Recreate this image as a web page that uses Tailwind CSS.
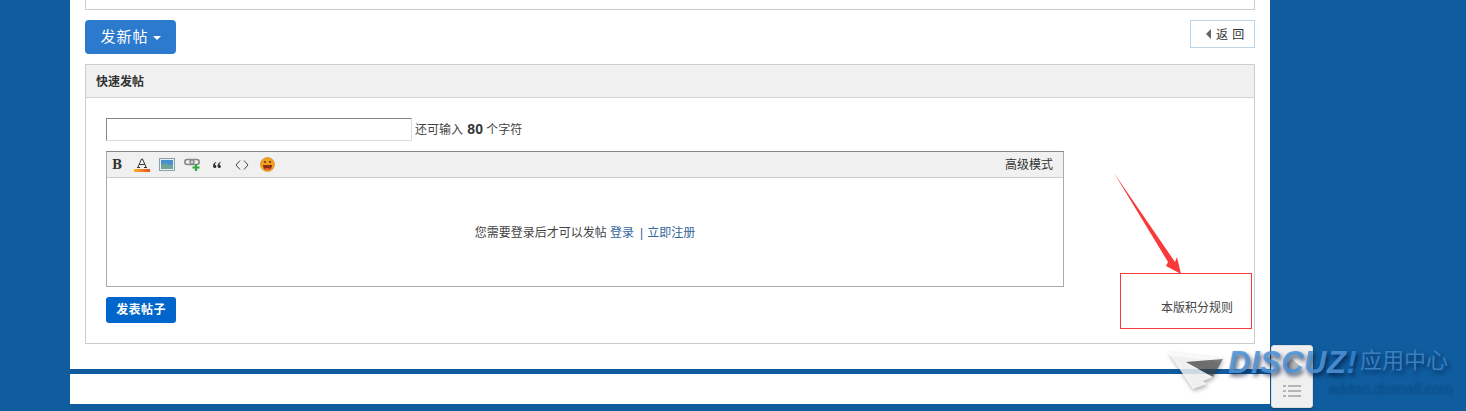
<!DOCTYPE html>
<html lang="zh-CN">
<head>
    <meta charset="UTF-8">
    <title>快速发帖</title>
    <script src="https://cdn.jsdelivr.net/npm/@tailwindcss/browser@4"></script>
</head>
<body class="bg-[#0f5c9e] h-[411px] overflow-hidden font-['Liberation_Sans','Noto_Sans_CJK_SC',sans-serif] text-[12px] text-[#444]">
    <div class="relative ml-[70px] w-[1200px] h-[404px] bg-white">
        <div class="mx-[15px] h-[10px] border border-t-0 border-[#cdcdcd]"></div>

        <div class="mx-[15px] mt-[10px] h-[34px] flex justify-between items-start">
            <button class="w-[91px] h-[34px] pt-[1px] bg-[#2b7acd] rounded-[4px] text-white text-[15px] tracking-[1px] flex items-center justify-center gap-[4px]">
                发新帖
                <span class="w-0 h-0 border-x-[4px] border-x-transparent border-t-[4px] border-t-white"></span>
            </button>
            <a class="w-[65px] h-[28px] border border-[#bcd6e8] flex items-center pl-[15px] gap-[5px] text-[#333]">
                <span class="w-0 h-0 border-y-[5px] border-y-transparent border-r-[5px] border-r-[#666]"></span>
                <span class="tracking-[0.5px] pt-[1px]">返 回</span>
            </a>
        </div>

        <div class="mx-[15px] mt-[10px] h-[280px] border border-[#cdcdcd]">
            <div class="h-[33px] bg-[#f0f0f0] border-b border-[#cdd3d8] px-[10px] pt-[2px] flex items-center font-bold text-[#333]">快速发帖</div>
            <div class="pt-[20px] px-[20px]">
                <div class="flex items-center h-[23px]">
                    <input type="text" class="w-[306px] h-[23px] border border-[#dcdcdc] border-t-[#868686] border-l-[#868686] bg-white">
                    <span class="ml-[3px]">还可输入 <b class="ml-[1px] text-[14px] text-[#333]">80</b> 个字符</span>
                </div>
                <div class="mt-[10px] w-[958px] h-[136px] border border-[#aaa] border-t-[#868686]">
                    <div class="h-[26px] bg-[#f0f0f0] border-b border-[#ccc] flex items-center gap-[5px] pr-[10px]">
                        <span class="w-[20px] text-center font-['DejaVu_Serif'] font-bold text-[12px] text-[#333]">B</span>
                        <span class="w-[20px] flex justify-center">
                            <svg width="16" height="16" viewBox="0 0 16 16">
                                <defs><linearGradient id="fontBar"><stop offset="0" stop-color="#f7b32b"/><stop offset="1" stop-color="#e8501e"/></linearGradient></defs>
                                <path d="M4 10L7.500 2h1L12 10M5.500 7.500h5M3 10.500h3M10 10.500h3" fill="none" stroke="#333"/>
                                <rect y="12" width="16" height="3" fill="url(#fontBar)"/>
                            </svg>
                        </span>
                        <span class="w-[20px] flex justify-center">
                            <svg width="16" height="13" viewBox="0 0 16 13"><rect x="0.500" y="0.500" width="15" height="12" fill="#e8eef2" stroke="#8aa0ac"/><rect x="2" y="2" width="12" height="5" fill="#4a90cf"/><path d="M2 7l4-2 4 2h4v4H2z" fill="#6fa598"/></svg>
                        </span>
                        <span class="w-[20px] flex justify-center">
                            <svg width="16" height="13" viewBox="0 0 16 13"><rect x="0.800" y="1.500" width="9" height="5" rx="2.500" fill="none" stroke="#888" stroke-width="1.600"/><rect x="6.200" y="1.500" width="9" height="5" rx="2.500" fill="none" stroke="#888" stroke-width="1.600"/><path d="M8.500 9.500h7M12 6v7" stroke="#2faa3c" stroke-width="2.200"/></svg>
                        </span>
                        <span class="w-[20px] flex justify-center">
                            <svg width="8" height="6" viewBox="0 0 8 6"><path d="M3.300 0C1.300.6 0 2 0 3.800 0 5.200.7 6 1.700 6 2.700 6 3.300 5.300 3.300 4.400 3.300 3.500 2.700 3 2 3 2 2 2.500 1.200 3.300.6zM7.800 0C5.800.6 4.500 2 4.500 3.800 4.500 5.200 5.200 6 6.200 6 7.200 6 7.800 5.300 7.800 4.400 7.800 3.500 7.200 3 6.500 3 6.500 2 7 1.200 7.800.6z" fill="#333"/></svg>
                        </span>
                        <span class="w-[20px] flex justify-center">
                            <svg width="14" height="10" viewBox="0 0 14 10"><path d="M5 .5L1 5l4 4.500M9 .5L13 5 9 9.500" fill="none" stroke="#444"/></svg>
                        </span>
                        <span class="w-[20px] flex justify-center">
                            <svg width="15" height="15" viewBox="0 0 15 15"><circle cx="7.500" cy="7.500" r="7" fill="#f0a020" stroke="#d9811a" stroke-width="0.600"/><circle cx="5" cy="5" r="1" fill="#5a3510"/><circle cx="10" cy="5" r="1" fill="#5a3510"/><path d="M3 8h9c0 3-2 5-4.500 5S3 11 3 8z" fill="#8a2f10"/><path d="M5 11h5l-1 2H6z" fill="#e85a3a"/></svg>
                        </span>
                        <span class="ml-auto text-[#333]">高级模式</span>
                    </div>
                    <div class="h-[108px] pt-[2px] flex items-center justify-center">
                        <span>您需要登录后才可以发帖 <a class="text-[#336699]">登录</a><span class="text-[#336699] ml-[6px] mr-[4px]">|</span><a class="text-[#336699]">立即注册</a></span>
                    </div>
                </div>
                <button class="mt-[10px] w-[70px] h-[26px] bg-[#0066cc] rounded-[3px] text-white font-bold tracking-[0.4px]">发表帖子</button>
            </div>
        </div>

        <div class="h-[5px] mt-[25px] bg-[#0f5c9e]"></div>

        <!-- 标注 -->
        <div class="absolute left-[1050px] top-[273px] w-[132px] h-[56px] border border-[#f83a3a] pl-[40px] pt-[25px] text-[#444]">本版积分规则</div>
        <svg class="absolute left-[1040px] top-[170px]" width="76" height="106" viewBox="0 0 76 106">
            <path d="M4 3L65 92 67 87 71 104 56 96 58 92z" fill="#f83a3a"/>
        </svg>
    </div>

    <!-- 右下角按钮 -->
    <div class="absolute left-[1271px] top-[345px] w-[42px] h-[63px] bg-[#f0f0f0] border border-[#ddd] rounded-[3px] shadow-[0_1px_2px_rgba(0,0,0,0.3)] flex flex-col items-center">
        <svg class="mt-[8px]" width="20" height="20" viewBox="0 0 20 20"><path d="M10 5L1 13h4v5h10v-5h4z" fill="#b5b5b5"/></svg>
        <svg class="mt-[10px]" width="20" height="14" viewBox="0 0 20 14"><path d="M1 2h3M6 2h13M1 7h3M6 7h13M1 12h3M6 12h13" stroke="#b5b5b5" stroke-width="2"/></svg>
    </div>

    <!-- 水印 -->
    <svg class="absolute left-[1168px] top-[350px] drop-shadow-[1px_2px_2px_rgba(0,0,0,0.4)]" width="64" height="46" viewBox="0 0 64 46">
        <path d="M0 2L55 9 18 12 45 27 35 31 39 34 25 39z" fill="#fff" fill-opacity="0.8"/>
        <path d="M18 12L55 9 45 27z" fill="#444" fill-opacity="0.65"/>
    </svg>
    <div class="absolute left-[1228px] top-[345px] text-[31px] leading-[36px] font-bold italic tracking-[0.5px] text-[#4f93d6]/90 [text-shadow:2px_3px_4px_rgba(0,20,60,0.7)]">DISCUZ<span class="text-[#2f7cc8]">!</span></div>
    <div class="absolute left-[1360px] top-[346px] text-[22px] leading-[30px] text-[#3a80bf] [text-shadow:2px_3px_4px_rgba(0,20,60,0.6)]">应用中心</div>
    <div class="absolute left-[1328px] top-[379px] text-[15px] leading-[20px] text-[#0c4a82] blur-[0.8px]">addon.dismall.com</div>
</body>
</html>
